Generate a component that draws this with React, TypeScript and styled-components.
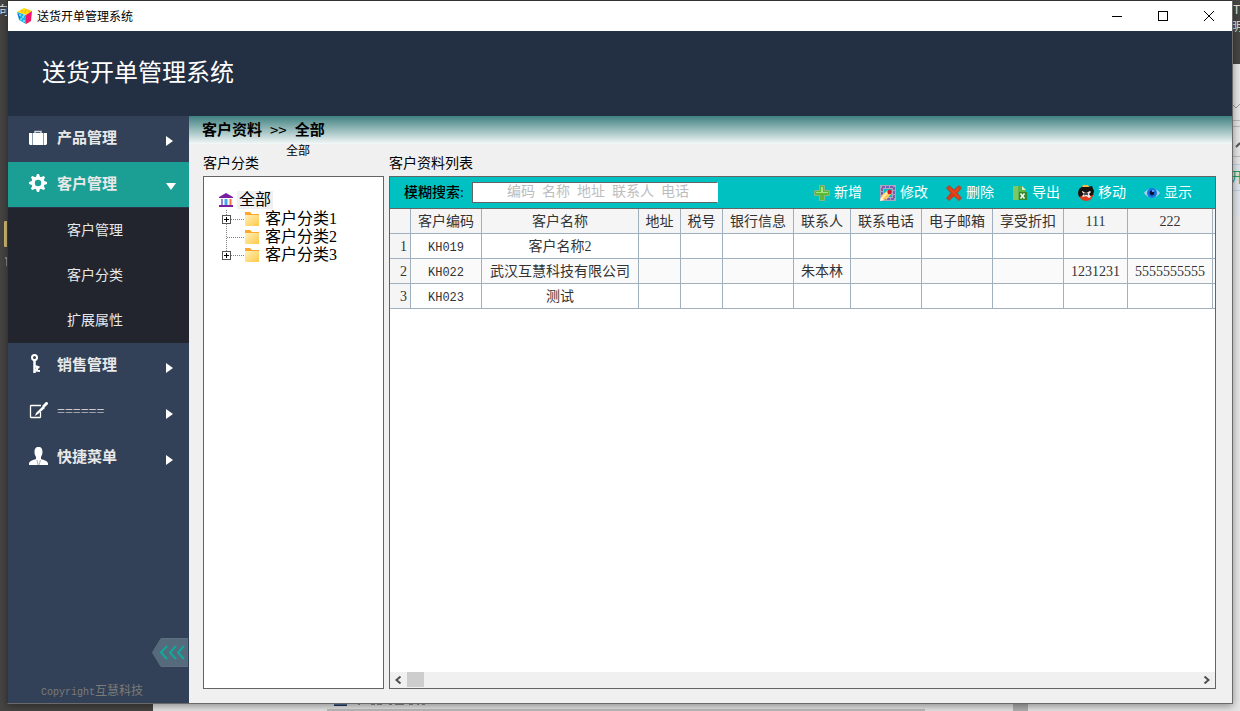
import React from "react";
import styled, { createGlobalStyle, css } from "styled-components";

const GlobalStyle = createGlobalStyle`
  *, *::before, *::after { box-sizing: border-box; }
  body {
    margin: 0;
    font-family: "Liberation Serif", "Noto Sans CJK SC", serif;
    font-size: 14px;
    line-height: 20px;
    color: #000;
  }
  button, input { font: inherit; color: inherit; }
  button { border: 0; padding: 0; background: none; cursor: pointer; }
  svg { display: block; flex: none; }
`;

/* ---------- desktop behind the window ---------- */

const Desktop = styled.div`
  position: relative;
  display: flex;
  min-height: 100vh;
  padding: 0 7px 7px;
  overflow: hidden;
  background: #474543;
`;

const BackWindow = styled.div`
  position: absolute;
  left: 153px;
  right: 0;
  top: 64px;
  bottom: 0;
  background: #e6e6e6;
`;

const BackDrawing = styled.svg<{ $side: "left" | "right" | "bottom" }>`
  position: absolute;
  font-family: "Noto Sans CJK SC", sans-serif;
  ${({ $side }) =>
    $side === "left" ? "left: 0; top: 0;" : $side === "right" ? "right: 0; top: 0;" : "left: 327px; bottom: 0;"}
`;

/* ---------- window frame ---------- */

const Window = styled.div`
  position: relative;
  flex: 1;
  min-width: 0;
  display: flex;
  flex-direction: column;
  border: 1px solid #6a6a6a;
  border-top-color: #33312f;
  border-left-color: #333439;
  background: #f0f0f0;
  box-shadow: 0 2px 8px rgba(0, 0, 0, 0.4);
`;

const TitleBar = styled.div`
  display: flex;
  align-items: center;
  height: 30px;
  padding: 0 0 1px 9px;
  background: #fff;
  font-family: "Noto Sans CJK SC", sans-serif;
  font-size: 12px;
`;

const TitleText = styled.span`
  flex: 1;
  padding-left: 5px;
`;

const WindowButton = styled.button`
  display: flex;
  align-items: center;
  justify-content: center;
  width: 46px;
  height: 29px;
`;

const Banner = styled.header`
  display: flex;
  align-items: center;
  height: 85px;
  padding: 0 34px 6px;
  background: #232f42;
`;

const BannerTitle = styled.h1`
  margin: 0;
  font-family: "Noto Sans CJK SC", sans-serif;
  font-size: 24px;
  line-height: 32px;
  font-weight: 400;
  color: #fff;
`;

const Body = styled.div`
  flex: 1;
  display: flex;
  min-height: 0;
`;

/* ---------- sidebar ---------- */

const Sidebar = styled.nav`
  display: flex;
  flex-direction: column;
  width: 181px;
  background: #324157;
  color: #e8e8e8;
`;

const NavItem = styled.button<{ $active?: boolean }>`
  display: flex;
  align-items: center;
  height: 46px;
  padding: 0 12px 0 20px;
  text-align: left;
  font-size: 15px;
  font-weight: 700;
  ${({ $active }) =>
    $active &&
    css`
      background: #1b9f94;
      border-bottom: 1px solid #2c3648;
    `}
`;

const NavIcon = styled.span`
  width: 29px;
  padding: 0 0 4px 1px;
`;

const NavLabel = styled.span`
  flex: 1;
  padding-bottom: 2px;
`;

const NavArrow = styled.span`
  width: 11px;
  padding-top: 4px;
`;

const SubMenu = styled.div`
  display: flex;
  flex-direction: column;
  background: #22252e;
`;

const SubItem = styled.button`
  height: 45px;
  padding-left: 59px;
  text-align: left;
`;

const SidebarFoot = styled.div`
  display: flex;
  flex-direction: column;
  margin-top: auto;
`;

const CollapseButton = styled.button`
  align-self: flex-end;
  margin-right: 1px;
`;

const Copyright = styled.div`
  padding: 14px 0 0 33px;
  font-size: 12px;
  color: #7d7b78;
`;

const Mono = styled.span<{ $size: number }>`
  font-family: "Liberation Mono", monospace;
  font-size: ${({ $size }) => $size}px;
`;

const Divider = styled.span`
  font-size: 14px;
  font-weight: 400;
`;

/* ---------- content ---------- */

const Content = styled.main`
  flex: 1;
  min-width: 0;
  display: flex;
  flex-direction: column;
`;

const Breadcrumb = styled.div`
  position: relative;
  display: flex;
  align-items: center;
  gap: 8px;
  height: 28px;
  padding-left: 13px;
  background: linear-gradient(#3f8080, #f4f8f8);
  font-size: 15px;
  font-weight: 700;
`;

const Separator = styled.span`
  font-family: "Noto Sans CJK SC", sans-serif;
  font-weight: 400;
`;

const Hint = styled.span`
  position: absolute;
  left: 97px;
  top: 25px;
  font-size: 12px;
  font-weight: 400;
`;

const Panels = styled.div`
  flex: 1;
  display: grid;
  grid-template-columns: 181px minmax(0, 1fr);
  grid-template-rows: 32px 1fr;
  column-gap: 5px;
  padding: 0 16px 14px 14px;
`;

const PanelTitle = styled.h2`
  margin: 0;
  padding-top: 10px;
  font-size: 14px;
  font-weight: 400;
`;

const Panel = styled.section`
  display: flex;
  flex-direction: column;
  min-width: 0;
  border: 1px solid #646464;
  background: #fff;
`;

/* ---------- tree ---------- */

const Tree = styled.div`
  padding: 14px 0 0 15px;
  font-size: 16px;
  line-height: 18px;
`;

const TreeRoot = styled.div`
  display: flex;
  align-items: center;
  gap: 4px;
  padding-bottom: 1px;
`;

const RootLabel = styled.span`
  padding: 0 2px;
  background: #f0f0f0;
`;

const TreeNode = styled.div`
  display: flex;
  align-items: center;
  height: 18px;
  gap: 5px;
`;

const TreeBranch = styled.div`
  display: flex;
  align-items: center;
  padding-left: 3px;
`;

/* ---------- toolbar ---------- */

const Toolbar = styled.div`
  display: flex;
  align-items: center;
  height: 32px;
  padding: 0 23px 0 14px;
  border-bottom: 1px solid #646464;
  background: #00c1c1;
`;

const SearchLabel = styled.label`
  width: 68px;
  font-weight: 500;
`;

const SearchInput = styled.input`
  width: 246px;
  height: 21px;
  padding: 0 0 2px 34px;
  border: 1px solid #646464;
  border-right-color: #fff;
  border-radius: 0;
  background: #fff;
  outline: 0;
  &::placeholder { color: #bdbdbd; opacity: 1; }
`;

const Actions = styled.div`
  display: flex;
  gap: 18px;
  margin-left: auto;
`;

const ActionButton = styled.button`
  display: flex;
  align-items: center;
  gap: 4px;
  color: #fff;
`;

/* ---------- data table ---------- */

const TableArea = styled.div`
  flex: 1;
  overflow: hidden;
`;

const Table = styled.table`
  width: 100%;
  table-layout: fixed;
  border-spacing: 0;
  color: #333;
`;

const cell = css`
  height: 25px;
  padding: 2px 0 0;
  border-right: 1px solid #a0b0bf;
  border-bottom: 1px solid #a0b0bf;
  text-align: center;
  font-weight: 400;
  line-height: 20px;
  white-space: nowrap;
  overflow: hidden;
  &:last-child { border-right: 0; }
`;

const HeadCell = styled.th`
  ${cell}
  background: #f5f5f5;
`;

const IndexCell = styled.th`
  ${cell}
  padding-right: 3px;
  text-align: right;
  background: #f5f5f5;
`;

const Row = styled.tr`
  &:nth-child(even) { background: #fafafa; }
`;

const Cell = styled.td`
  ${cell}
`;

const ScrollBar = styled.div`
  display: flex;
  align-items: center;
  height: 16px;
  background: #f0f0f0;
`;

const ScrollButton = styled.button`
  display: flex;
  align-items: center;
  justify-content: center;
  width: 17px;
  height: 16px;
`;

const ScrollThumb = styled.div`
  width: 17px;
  height: 15px;
  margin: 0 auto 1px 0;
  background: #cdcdcd;
`;

/* ---------- icons ---------- */

const CubeIcon = () => (
  <svg width="15" height="16" viewBox="0 0 15 16">
    <path d="M0 4 7 0l8 3-6 4z" fill="#ffe000" />
    <path d="M0 4l9 3v9l-7-4z" fill="#19b5ea" />
    <path d="M9 7l6-4-1 10-5 3z" fill="#f3195b" />
    <path d="M4 3h2M8 2h2M7 4h2M11 3h2" stroke="#f93" />
    <path d="M2 7h2M5 9h2M3 11h2M6 7h2M6 13h2" stroke="#d9f6ff" />
    <path d="M1 6l2 5" stroke="#2a5bd0" />
    <path d="M10 9h2M12 6h2M11 12h2" stroke="#f0c" />
  </svg>
);

const SuitcaseIcon = () => (
  <svg width="18" height="15" viewBox="0 0 18 15">
    <path d="M6 4V1.500h6V4" fill="none" stroke="#cfd5df" strokeWidth="1.500" />
    <rect x="4" y="3" width="10" height="12" fill="#fff" />
    <path d="M0 3h3v12H1l-1-1zM15 3h3v11l-1 1h-2z" fill="#fff" />
    <path d="M3.500 3v12M14.500 3v12" stroke="#8d99ac" />
  </svg>
);

const GearIcon = () => (
  <svg width="18" height="18" viewBox="0 0 18 18">
    <g fill="#fff">
      {[0, 45, 90, 135].map((a) => (
        <path key={a} d="M7 3l1-3h2l1 3v12l-1 3H8l-1-3z" transform={`rotate(${a} 9 9)`} />
      ))}
      <circle cx="9" cy="9" r="6.500" />
    </g>
    <circle cx="9" cy="9" r="3.200" fill="#1b9f94" />
  </svg>
);

const KeyIcon = () => (
  <svg width="18" height="20" viewBox="0 0 18 20" fill="none" stroke="#fff">
    <circle cx="5.500" cy="3.500" r="2.500" strokeWidth="2" />
    <path d="M5.500 6v13" strokeWidth="2.500" />
    <path d="M6 12l4.500 1.500M6 16.500l5 .500M8 13v4" strokeWidth="2" />
  </svg>
);

const EditIcon = () => (
  <svg width="19" height="17" viewBox="0 0 19 17" fill="none" stroke="#fff">
    <path d="M12 3.500H2L1.500 4v11l.500.500h9l.500-.500v-5" strokeWidth="1.300" />
    <path d="M7 11l7-7 2 2-7 6-3 2z" fill="#fff" stroke="none" />
    <path d="M15 4l2.500-2.500" strokeWidth="3" strokeLinecap="round" />
  </svg>
);

const UserIcon = () => (
  <svg width="19" height="18" viewBox="0 0 19 18" fill="#fff">
    <path d="M9.500 0C12.500 0 13.500 2 13.500 5c0 2-.700 3.500-1.500 5v2c3 1 7 2 7 4.500V18H0v-1.500C0 14 4 13 7 12v-2C6 8.500 5.500 7 5.500 5c0-3 1-5 4-5z" />
    <path d="M8 13l1 5M11.500 13l-1.500 5" stroke="#8d99ac" strokeWidth=".8" />
  </svg>
);

const ArrowRight = () => (
  <svg width="7" height="10" viewBox="0 0 7 10"><path d="M0 0l7 5-7 5z" fill="#fff" /></svg>
);

const ArrowDown = () => (
  <svg width="10" height="7" viewBox="0 0 10 7"><path d="M0 0h10L5 7z" fill="#fff" /></svg>
);

const BankIcon = () => (
  <svg width="14" height="14" viewBox="0 0 14 14">
    <path d="M0 4 7 0l7 4v1H0zM0 12h14v2H0z" fill="#7b1fa2" />
    <path d="M3 6v6" stroke="#8f83dc" strokeWidth="2" />
    <path d="M7 6v6" stroke="#42a5f5" strokeWidth="3" />
    <path d="M11.500 6v6" stroke="#ff7043" strokeWidth="2" />
  </svg>
);

const FolderIcon = () => (
  <svg width="15" height="15" viewBox="0 0 15 15">
    <defs>
      <linearGradient id="folder" x1="0" x2="1" y2="1">
        <stop offset="0" stopColor="#fff0b8" />
        <stop offset="1" stopColor="#ffc94a" />
      </linearGradient>
    </defs>
    <path d="M0 0h5l2 2h7v4H0z" fill="#ffa62e" />
    <path d="M0 3h14v11H1l-1-1z" fill="url(#folder)" />
  </svg>
);

const Branch = ({ plus, last }: { plus: boolean; last: boolean }) => (
  <svg width="23" height="18" viewBox="0 0 23 18" fill="none" shapeRendering="crispEdges">
    <path d={last ? "M4.500 0v9" : "M4.500 0v18"} stroke="#808080" strokeDasharray="1 1" />
    <path d="M5 9.500h18" stroke="#808080" strokeDasharray="1 1" />
    {plus && (
      <>
        <rect x=".5" y="5.500" width="8" height="8" fill="#fff" stroke="#555" />
        <path d="M2 9.500h5M4.500 7v5" stroke="#000" />
      </>
    )}
  </svg>
);

const AddIcon = () => (
  <svg width="16" height="16" viewBox="0 0 16 16">
    <path d="M5.500 .5h5v5h5v5h-5v5h-5v-5h-5v-5h5z" fill="#5cb83c" stroke="#86b98a" />
    <path d="M7 2h2v5h5v1H2V7h5z" fill="#a4e67a" />
  </svg>
);

const ModifyIcon = () => (
  <svg width="16" height="16" viewBox="0 0 16 16" fill="none">
    <rect x="2" y="2" width="12" height="12" stroke="#a9a6c4" strokeWidth="4" />
    <rect x="2" y="2" width="12" height="12" stroke="#7a5fb0" strokeWidth="2" strokeDasharray="3 1" />
    <path d="M0 16l2-6 6-5 4 3-5 6z" fill="#ffc65a" />
    <path d="M2 13l6-6" stroke="#fff0b0" strokeWidth="2" />
    <path d="M0 16l1-4 3 3z" fill="#fff6e4" />
    <circle cx="9.500" cy="7" r="2.200" fill="#d8152c" />
  </svg>
);

const DeleteIcon = () => (
  <svg width="16" height="16" viewBox="0 0 16 16">
    <path d="M3 .5 8 5l5-4.500L15.500 3 11 8l4.500 5-2.500 2.500L8 11l-5 4.500L.5 13 5 8 .5 3z" fill="#d93a12" stroke="#8e5548" />
    <path d="M3 3l10 10M13 3 9 7" stroke="#e8451c" strokeWidth="2" />
  </svg>
);

const ExportIcon = () => (
  <svg width="16" height="16" viewBox="0 0 16 16">
    <path d="M1 1h9l4 4v10H1z" fill="#5cb54a" />
    <path d="M1 1h5v14H1z" fill="#7cc766" />
    <path d="M10 1l4 4h-4z" fill="#d8f0c8" />
    <path d="M7 7h8v8H7z" fill="#35882c" />
    <path d="M8.500 8.500l4 5M12.500 8.500l-4 5" stroke="#fff" strokeWidth="1.500" />
  </svg>
);

const MoveIcon = () => (
  <svg width="16" height="16" viewBox="0 0 16 16">
    <circle cx="8" cy="8.500" r="7.500" fill="#e23a1c" />
    <path d="M1 4l4-3 5 1 4-1 2 5-1 4-3 1-4-2-4 2-3 1-1-4z" fill="#16100e" />
    <path d="M5 0h5l1 2H4z" fill="#ffb44a" />
    <path d="M4 6l4 2 4-2 1 1-2 2 2 3-2 1-3-2-3 1-1-1 2-2-2-2z" fill="#f4ece8" />
    <path d="M6 8l4 2M10 8l-4 2" stroke="#222" />
  </svg>
);

const EyeIcon = () => (
  <svg width="16" height="16" viewBox="0 0 16 16">
    <path d="M0 8c4-6 12-6 16 0-4 6-12 6-16 0z" fill="#a9cdee" />
    <circle cx="8" cy="8" r="5" fill="#1872e8" />
    <circle cx="8" cy="8" r="2.400" fill="#0a1638" />
    <circle cx="9" cy="6" r="1" fill="#7fc4ff" />
  </svg>
);

const CollapseIcon = () => (
  <svg width="36" height="29" viewBox="0 0 36 29" fill="none">
    <path d="M9 .5h27v28H9L.5 14.500z" fill="#556b7b" stroke="#5d6f80" />
    <path d="M15 8l-6 6.500 6 6.500M24 8l-6 6.500 6 6.500M32 8l-6 6.500 6 6.500" stroke="#10a99c" strokeWidth="2" />
  </svg>
);

const Chevron = ({ right = false }: { right?: boolean }) => (
  <svg width="7" height="8" viewBox="0 0 7 8" fill="none">
    <path d={right ? "M1.500 0.500l4 3.500-4 3.500" : "M5.500 0.500l-4 3.500 4 3.500"} stroke="#505050" strokeWidth="2" />
  </svg>
);

/* ---------- data ---------- */

const columns = [
  { title: "客户编码", width: 71 },
  { title: "客户名称", width: 157 },
  { title: "地址", width: 42 },
  { title: "税号", width: 42 },
  { title: "银行信息", width: 71 },
  { title: "联系人", width: 57 },
  { title: "联系电话", width: 71 },
  { title: "电子邮箱", width: 71 },
  { title: "享受折扣", width: 71 },
  { title: "111", width: 64 },
  { title: "222", width: 85 },
];

const customers = [
  ["KH019", "客户名称2", "", "", "", "", "", "", "", "", ""],
  ["KH022", "武汉互慧科技有限公司", "", "", "", "朱本林", "", "", "", "1231231", "5555555555"],
  ["KH023", "测试", "", "", "", "", "", "", "", "", ""],
];

const categories = [
  { name: "客户分类1", plus: true },
  { name: "客户分类2", plus: false },
  { name: "客户分类3", plus: true },
];

const actions = [
  { label: "新增", Icon: AddIcon },
  { label: "修改", Icon: ModifyIcon },
  { label: "删除", Icon: DeleteIcon },
  { label: "导出", Icon: ExportIcon },
  { label: "移动", Icon: MoveIcon },
  { label: "显示", Icon: EyeIcon },
];

const navigation = [
  { label: "产品管理", Icon: SuitcaseIcon },
  { label: "客户管理", Icon: GearIcon, children: ["客户管理", "客户分类", "扩展属性"] },
  { label: "销售管理", Icon: KeyIcon },
  { label: "======", Icon: EditIcon, plain: true },
  { label: "快捷菜单", Icon: UserIcon },
];

/* ---------- page ---------- */

const Backdrop = () => (
  <>
    <BackWindow />
    <BackDrawing $side="left" width="12" height="280" viewBox="0 0 12 280" aria-hidden="true">
      <text x="-3" y="15" fontSize="12" fill="#dfe6f2">向</text>
      <rect x="4" y="221" width="5" height="26" rx="1" fill="#d9c27a" />
      <path d="M5 258h3M7 258v8" stroke="#c8d4dd" />
    </BackDrawing>
    <BackDrawing $side="right" width="12" height="220" viewBox="0 0 12 220" fill="none" aria-hidden="true">
      <text x="-2" y="14" fontSize="12" fill="#e4ece4">ET</text>
      <text x="3" y="31" fontSize="12" fill="#e4ece4">明</text>
      <path d="M5 105l3 3 4-4" stroke="#999" />
      <path d="M0 120.500h12M0 126.500h12M0 156.500h12" stroke="#bbb" />
      <path d="M8 147l4-4" stroke="#555" strokeWidth="2" />
      <path d="M0 165h12v51H0z" fill="#dfe5ec" />
      <text x="2" y="182" fontSize="14" fill="#1fa35c">开</text>
      <path d="M0 164.500h12M0 190.500h12" stroke="#bcd0e4" />
    </BackDrawing>
    <BackDrawing $side="bottom" width="710" height="8" viewBox="0 0 710 8" aria-hidden="true">
      <path d="M7 0h13v2H7z" fill="#4a6fa8" />
      <path d="M7 2.500h13" stroke="#26364f" />
      <path d="M31 1h2M44 1h4M50 1h5M62 1h3M68 1h9M82 1h4M90 1h2M95 1h3" stroke="#333" />
      <path d="M0 6h598v2H0z" fill="#bcbcbc" />
      <path d="M686 0h15v8h-15z" fill="#b0b0b0" />
    </BackDrawing>
  </>
);

export default function App() {
  return (
    <Desktop>
      <GlobalStyle />
      <Backdrop />
      <Window>
        <TitleBar>
          <CubeIcon />
          <TitleText>送货开单管理系统</TitleText>
          <WindowButton aria-label="最小化">
            <svg width="10" height="10"><path d="M0 5.500h10" stroke="#000" /></svg>
          </WindowButton>
          <WindowButton aria-label="最大化">
            <svg width="10" height="10"><rect x=".5" y=".5" width="9" height="9" fill="none" stroke="#000" /></svg>
          </WindowButton>
          <WindowButton aria-label="关闭">
            <svg width="10" height="10"><path d="M0 0l10 10M10 0L0 10" stroke="#000" /></svg>
          </WindowButton>
        </TitleBar>
        <Banner>
          <BannerTitle>送货开单管理系统</BannerTitle>
        </Banner>
        <Body>
          <Sidebar>
            {navigation.map(({ label, Icon, children, plain }) => (
              <React.Fragment key={label}>
                <NavItem $active={!!children}>
                  <NavIcon><Icon /></NavIcon>
                  <NavLabel>{plain ? <Divider>{label}</Divider> : label}</NavLabel>
                  <NavArrow>{children ? <ArrowDown /> : <ArrowRight />}</NavArrow>
                </NavItem>
                {children && (
                  <SubMenu>
                    {children.map((name) => (
                      <SubItem key={name}>{name}</SubItem>
                    ))}
                  </SubMenu>
                )}
              </React.Fragment>
            ))}
            <SidebarFoot>
              <CollapseButton aria-label="收起菜单"><CollapseIcon /></CollapseButton>
              <Copyright><Mono $size={10}>Copyright</Mono>互慧科技</Copyright>
            </SidebarFoot>
          </Sidebar>
          <Content>
            <Breadcrumb>
              <span>客户资料</span>
              <Separator>&gt;&gt;</Separator>
              <span>全部</span>
              <Hint>全部</Hint>
            </Breadcrumb>
            <Panels>
              <PanelTitle>客户分类</PanelTitle>
              <PanelTitle>客户资料列表</PanelTitle>
              <Panel>
                <Tree>
                  <TreeRoot>
                    <BankIcon />
                    <RootLabel>全部</RootLabel>
                  </TreeRoot>
                  {categories.map(({ name, plus }, i) => (
                    <TreeNode key={name}>
                      <TreeBranch>
                        <Branch plus={plus} last={i === categories.length - 1} />
                        <FolderIcon />
                      </TreeBranch>
                      <span>{name}</span>
                    </TreeNode>
                  ))}
                </Tree>
              </Panel>
              <Panel>
                <Toolbar>
                  <SearchLabel htmlFor="search">模糊搜索:</SearchLabel>
                  <SearchInput id="search" placeholder="编码  名称  地址  联系人  电话" />
                  <Actions>
                    {actions.map(({ label, Icon }) => (
                      <ActionButton key={label}>
                        <Icon />
                        {label}
                      </ActionButton>
                    ))}
                  </Actions>
                </Toolbar>
                <TableArea>
                  <Table>
                    <colgroup>
                      <col width={21} />
                      {columns.map(({ title, width }) => (
                        <col key={title} width={width} />
                      ))}
                      <col />
                    </colgroup>
                    <thead>
                      <tr>
                        <HeadCell />
                        {columns.map(({ title }) => (
                          <HeadCell key={title} scope="col">{title}</HeadCell>
                        ))}
                        <HeadCell />
                      </tr>
                    </thead>
                    <tbody>
                      {customers.map((row, r) => (
                        <Row key={row[0]}>
                          <IndexCell scope="row">{r + 1}</IndexCell>
                          {row.map((value, c) => (
                            <Cell key={c}>{c === 0 ? <Mono $size={12}>{value}</Mono> : value}</Cell>
                          ))}
                          <Cell />
                        </Row>
                      ))}
                    </tbody>
                  </Table>
                </TableArea>
                <ScrollBar>
                  <ScrollButton aria-label="向左滚动"><Chevron /></ScrollButton>
                  <ScrollThumb />
                  <ScrollButton aria-label="向右滚动"><Chevron right /></ScrollButton>
                </ScrollBar>
              </Panel>
            </Panels>
          </Content>
        </Body>
      </Window>
    </Desktop>
  );
}
